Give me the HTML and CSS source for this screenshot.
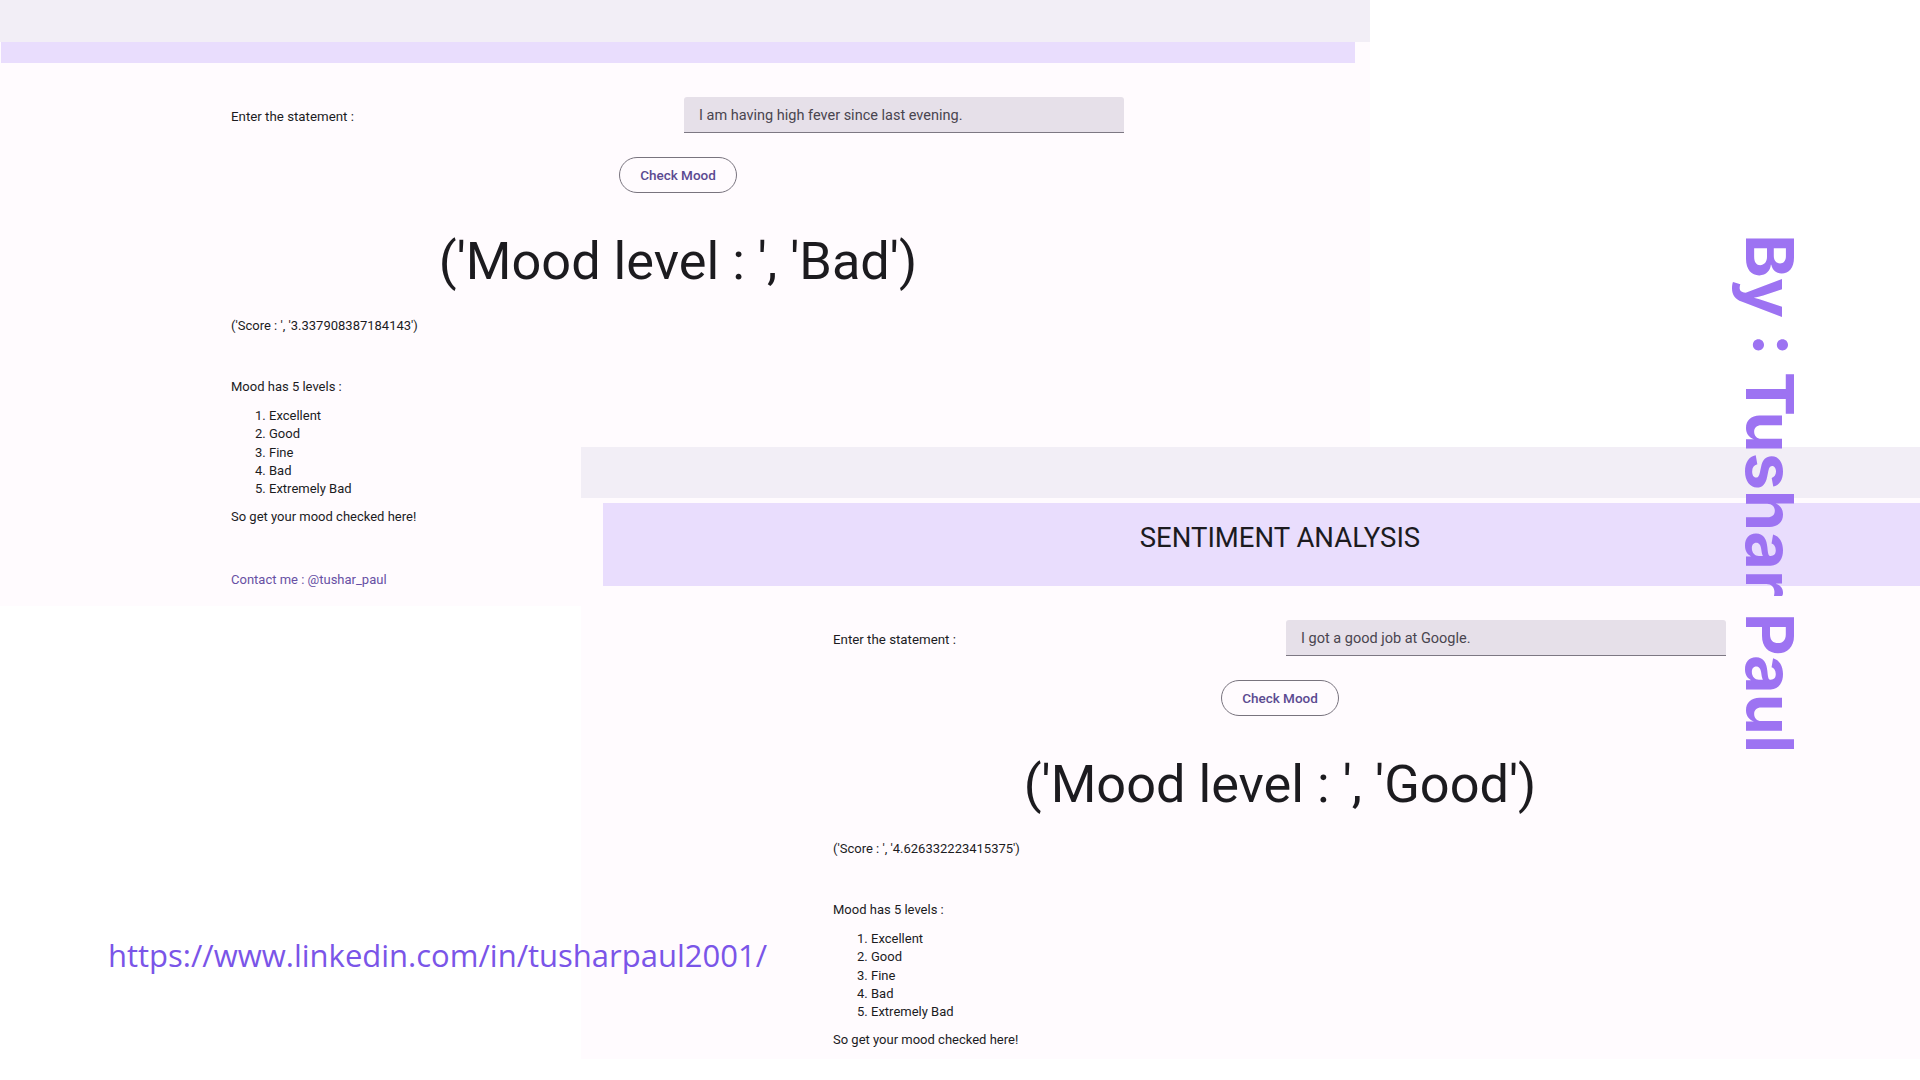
FILE: index.html
```html
<!DOCTYPE html>
<html lang="en">
<head>
<meta charset="utf-8">
<title>Sentiment Analysis</title>
<link rel="stylesheet" href="styles.css">
</head>
<body>
<div class="canvas">
  <section class="window window-left">
    <div class="chrome"></div>
    <div class="app app-left">
      <header class="appbar appbar-left"></header>
      <main class="content">
        <div class="form-row">
          <label class="label">Enter the statement :</label>
          <div class="input">I am having high fever since last evening.</div>
        </div>
        <div class="btn-row"><span class="btn">Check Mood</span></div>
        <h1 class="result">('Mood level : ', 'Bad')</h1>
        <p class="score">('Score : ', '3.337908387184143')</p>
        <p class="levels">Mood has 5 levels :</p>
        <ol class="list">
          <li>Excellent</li>
          <li>Good</li>
          <li>Fine</li>
          <li>Bad</li>
          <li>Extremely Bad</li>
        </ol>
        <p class="cta">So get your mood checked here!</p>
        <p class="contact">Contact me : @tushar_paul</p>
      </main>
    </div>
  </section>

  <section class="window window-right">
    <div class="chrome chrome-right"></div>
    <div class="app app-right">
      <header class="appbar appbar-right">SENTIMENT ANALYSIS</header>
      <main class="content">
        <div class="form-row">
          <label class="label">Enter the statement :</label>
          <div class="input">I got a good job at Google.</div>
        </div>
        <div class="btn-row"><span class="btn">Check Mood</span></div>
        <h1 class="result">('Mood level : ', 'Good')</h1>
        <p class="score">('Score : ', '4.626332223415375')</p>
        <p class="levels">Mood has 5 levels :</p>
        <ol class="list">
          <li>Excellent</li>
          <li>Good</li>
          <li>Fine</li>
          <li>Bad</li>
          <li>Extremely Bad</li>
        </ol>
        <p class="cta">So get your mood checked here!</p>
      </main>
    </div>
  </section>

  <a class="linkedin" href="#">https://www.linkedin.com/in/tusharpaul2001/</a>
  <div class="byline">By : Tushar Paul</div>
</div>
</body>
</html>
```

FILE: styles.css
```css
* { box-sizing: border-box; }
html, body {
  margin: 0;
  padding: 0;
  background: #ffffff;
}
body {
  font-family: Roboto, "Liberation Sans", Arial, sans-serif;
  color: #1c1b1f;
}
.canvas {
  position: relative;
  width: 1920px;
  height: 1080px;
  overflow: hidden;
  background: #ffffff;
}

/* windows on the canvas */
.window {
  position: absolute;
  overflow: hidden;
  background: #fffbfe;
  display: flex;
  flex-direction: column;
}
.window-left {
  left: 0;
  top: 0;
  width: 1370px;
  height: 606px;
}
.window-right {
  left: 581px;
  top: 447px;
  width: 1339px;
  height: 612px;
}
.chrome {
  flex: none;
  height: 42px;
  background: #f2eef6;
}
.chrome-right {
  height: 51px;
}
.app {
  flex: none;
  width: 1354px;
}
.app-left {
  margin-left: 1px;
}
.app-right {
  margin-left: 22px;
  margin-top: 5px;
}
.appbar {
  background: #e9ddfd;
}
.appbar-left {
  height: 21px;
}
.appbar-right {
  height: 83px;
  display: flex;
  align-items: center;
  justify-content: center;
  font-size: 27.5px;
  font-weight: 400;
  color: #1c1b1f;
  padding-bottom: 15px;
}

/* content */
.content {
  display: flex;
  flex-direction: column;
  font-size: 13px;
  line-height: 18.4px;
  color: #1c1b1f;
}
.form-row {
  display: flex;
  align-items: center;
  margin-top: 34px;
  padding-left: 230px;
  height: 36px;
}
.label {
  width: 453px;
  flex: none;
  padding-top: 4px;
  font-size: 13.3px;
}
.input {
  width: 440px;
  height: 36px;
  background: #e6e0e9;
  border-bottom: 1px solid #7d7883;
  border-radius: 3px 3px 0 0;
  padding: 3px 15px 0;
  display: flex;
  align-items: center;
  font-size: 14.5px;
  color: #49454f;
}
.btn-row {
  display: flex;
  justify-content: center;
  margin-top: 24px;
}
.btn {
  display: inline-flex;
  align-items: center;
  justify-content: center;
  width: 118px;
  height: 36px;
  border: 1px solid #79747e;
  border-radius: 18px;
  font-size: 13.5px;
  font-weight: 500;
  color: #5b4a91;
}
.result {
  margin: 36px 0 0;
  text-align: center;
  font-size: 52.3px;
  font-weight: 400;
  line-height: 64px;
  height: 64px;
  color: #1c1b1f;
}
.score {
  margin: 24px 0 0;
  padding-left: 230px;
  font-size: 13px;
}
.levels {
  margin: 43px 0 0;
  padding-left: 230px;
}
.list {
  margin: 10px 0 0;
  padding-left: 250px;
  list-style-position: outside;
}
.list li {
  padding-left: 0;
  margin-left: 18px;
}
.cta {
  margin: 9.5px 0 0;
  padding-left: 230px;
}
.contact {
  margin: 44.5px 0 0;
  padding-left: 230px;
  color: #6750a4;
}

/* overlays on the canvas */
.linkedin {
  position: absolute;
  left: 108px;
  top: 934px;
  font-family: "Open Sans", "Noto Sans", sans-serif;
  font-size: 31px;
  line-height: 42px;
  color: #7a55e8;
  text-decoration: none;
  white-space: nowrap;
}
.byline {
  position: absolute;
  left: 1731px;
  top: 234px;
  writing-mode: vertical-rl;
  font-family: Inter, "Open Sans", sans-serif;
  font-weight: 700;
  font-size: 66.5px;
  line-height: 77px;
  color: #9d73f2;
  white-space: nowrap;
}
```
